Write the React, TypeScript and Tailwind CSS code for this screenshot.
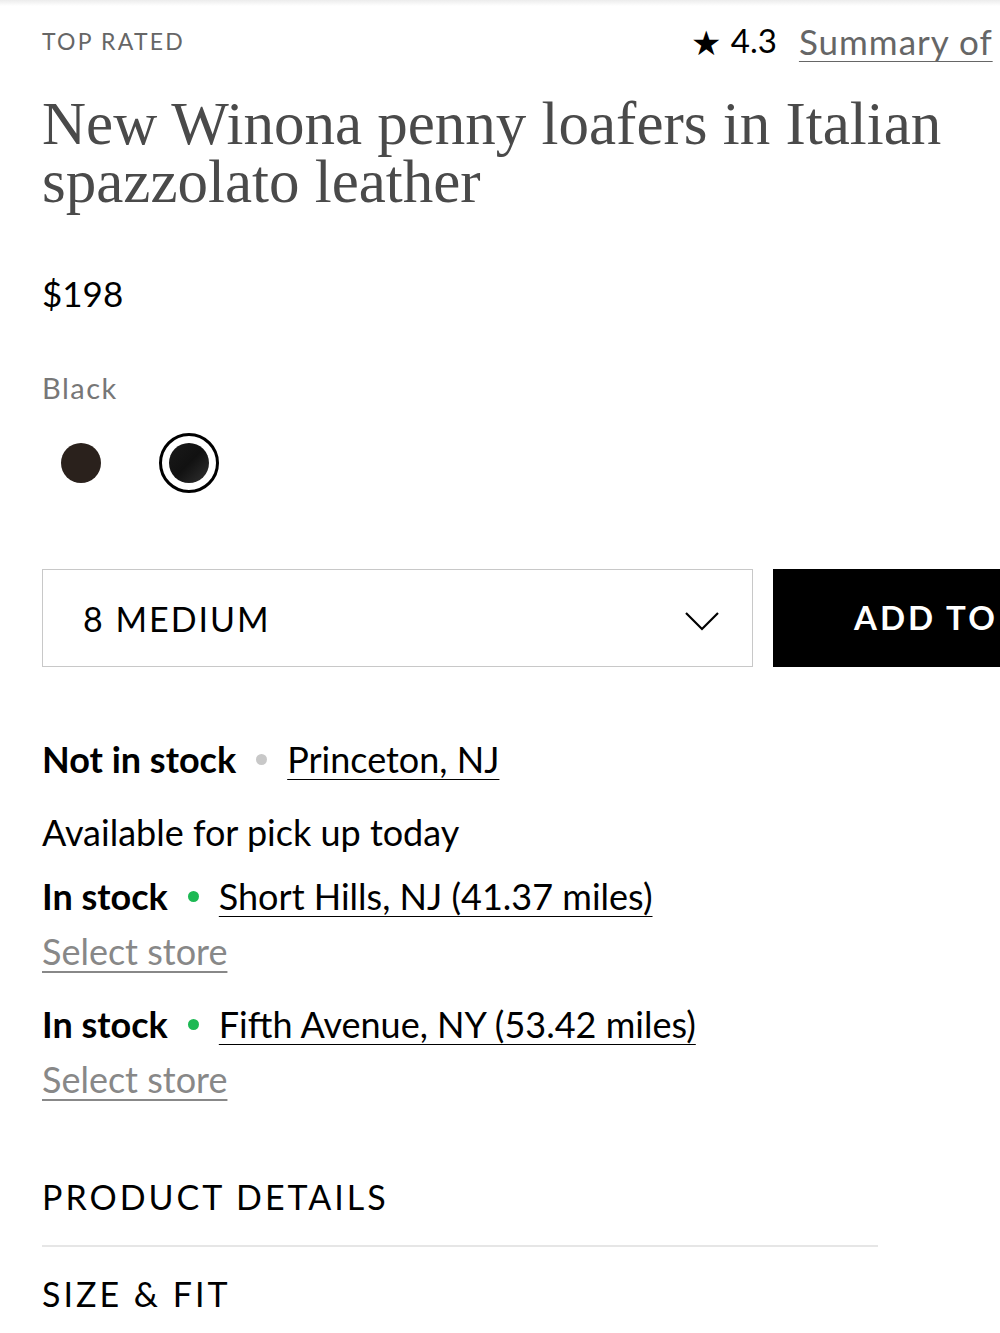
const sans = "font-['Lato','Noto_Sans',sans-serif]";

function Dot({ color }: { color: string }) {
    return <span className={`inline-block h-[11px] w-[11px] rounded-full ${color}`} />;
}

function StoreRow({ status, place, dot }: { status: string; place: string; dot: string }) {
    return (
        <div className="flex items-center text-[36px] leading-[40px] text-black">
            <span className="font-bold">{status}</span>
            <span className="mx-[20px] flex items-center"><Dot color={dot} /></span>
            <a className="underline decoration-1 underline-offset-[6px]">{place}</a>
        </div>
    );
}

export default function App() {
    return (
        <div className={`w-[1000px] h-[1333px] overflow-hidden bg-white ${sans}`}>
            <div className="h-[6px] bg-gradient-to-b from-[#ececec] to-white" />
            <div className="pl-[42px] w-[1200px]">
                <div className="mt-[18px] flex items-center h-[34px]">
                    <span className="text-[23px] tracking-[2.2px] text-[#666]">TOP RATED</span>
                    <div className="ml-[506px] flex items-center text-[33px]">
                        <span className="text-[34px] text-black">★</span>
                        <span className="ml-[10px] text-black">4.3</span>
                        <a className="ml-[22px] text-[35px] tracking-[1px] text-[#666] underline decoration-1 underline-offset-[6px] whitespace-nowrap">Summary of</a>
                    </div>
                </div>

                <h1 className="mt-[37px] w-[960px] font-['Liberation_Serif',serif] text-[61px] leading-[58px] text-[#4a4a4a]">
                    New Winona penny loafers in Italian spazzolato leather
                </h1>

                <div className="mt-[62px] text-[35px] leading-[40px] text-black">$198</div>

                <div className="mt-[55px] text-[29px] leading-[39px] tracking-[1.5px] text-[#777]">Black</div>

                <div className="mt-[26px] flex items-center h-[60px]">
                    <div className="ml-[19px] h-[40px] w-[40px] rounded-full bg-[#2a211c]" />
                    <div className="ml-[58px] flex h-[60px] w-[60px] items-center justify-center rounded-full border-[3px] border-black">
                        <div className="h-[40px] w-[40px] rounded-full bg-gradient-to-br from-[#1a1a1a] via-[#111] to-[#333]" />
                    </div>
                </div>

                <div className="mt-[76px] flex">
                    <div className="flex h-[98px] w-[711px] items-center justify-between border border-[#c8c8c8] pl-[40px] pr-[32px]">
                        <span className="text-[34px] tracking-[2px] text-black">8 MEDIUM</span>
                        <svg width="36" height="20" viewBox="0 0 36 20" fill="none" stroke="black" strokeWidth="2.2" className="mt-[6px]">
                            <path d="M2 2 L18 18 L34 2" />
                        </svg>
                    </div>
                    <button className="ml-[20px] flex h-[98px] w-[400px] items-center bg-black pl-[81px] text-[33px] font-bold tracking-[3px] text-white whitespace-nowrap">
                        ADD TO
                    </button>
                </div>

                <div className="mt-[72px]">
                    <StoreRow status="Not in stock" place="Princeton, NJ" dot="bg-[#c8c8c8]" />
                    <div className="mt-[33px] text-[36px] leading-[40px] text-black">Available for pick up today</div>
                    <div className="mt-[24px]">
                        <StoreRow status="In stock" place="Short Hills, NJ (41.37 miles)" dot="bg-[#1db954]" />
                        <a className="mt-[15px] block w-fit text-[36px] leading-[40px] text-[#888] underline decoration-2 decoration-[#888] underline-offset-[6px]">Select store</a>
                    </div>
                    <div className="mt-[33px]">
                        <StoreRow status="In stock" place="Fifth Avenue, NY (53.42 miles)" dot="bg-[#1db954]" />
                        <a className="mt-[15px] block w-fit text-[36px] leading-[40px] text-[#888] underline decoration-2 decoration-[#888] underline-offset-[6px]">Select store</a>
                    </div>
                </div>

                <div className="mt-[78px] w-[836px]">
                    <div className="pb-[28px] text-[34px] leading-[40px] tracking-[3px] text-black">PRODUCT DETAILS</div>
                    <div className="h-[2px] bg-[#e6e6e6]" />
                    <div className="pt-[27px] text-[34px] leading-[40px] tracking-[3px] text-black">SIZE &amp; FIT</div>
                </div>
            </div>
        </div>
    );
}
